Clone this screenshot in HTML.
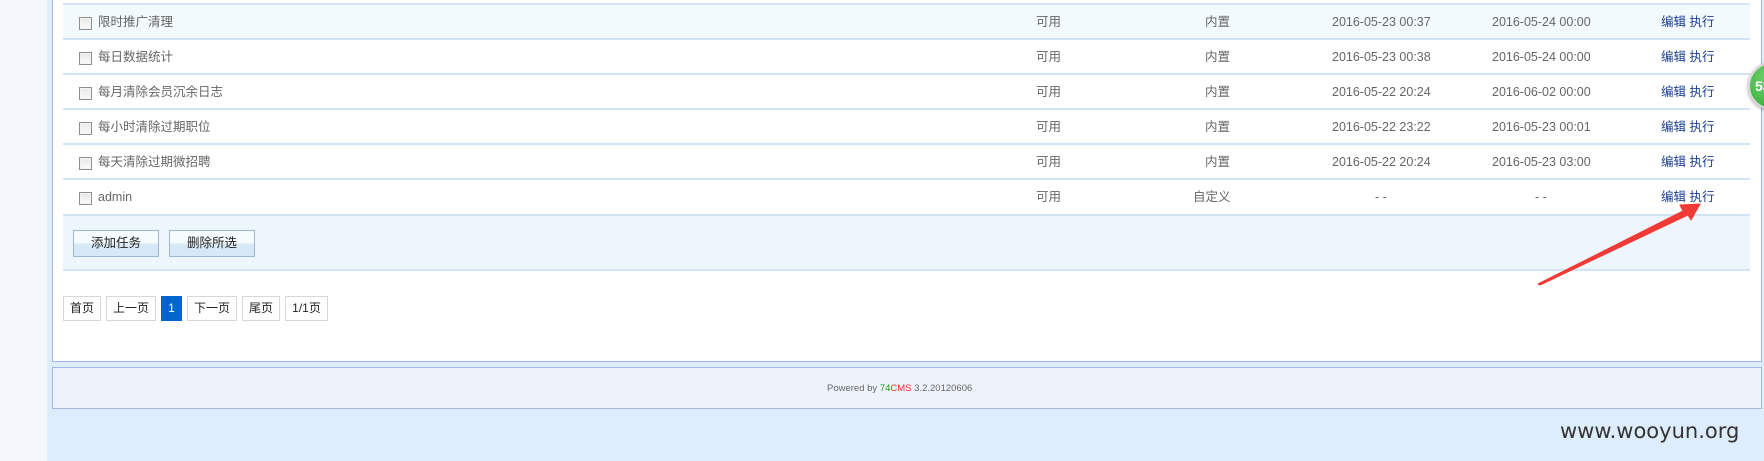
<!DOCTYPE html>
<html><head><meta charset="utf-8"><style>
*{margin:0;padding:0;box-sizing:border-box}
body{width:1764px;height:461px;overflow:hidden;background:#deedfc;position:relative;font-family:"Liberation Sans","Noto Sans CJK SC",sans-serif;font-size:12px;color:#666}
.side{position:absolute;left:0;top:0;width:47px;height:461px;background:#f4f8fd}
.panel{position:absolute;left:52px;top:-2px;width:1710px;height:364px;background:#fff;border:1px solid #a3b7df;border-top:none}
.row{position:absolute;left:63px;width:1687px;height:35px;border-top:2px solid #d3e4f6}
.row span{position:absolute;top:10px;height:15px;line-height:15px;font-size:12.5px;white-space:nowrap}
.cb{position:absolute;left:16px;top:12px;width:13px;height:13px;border:1px solid #8f8f8f;background:linear-gradient(#e8e8e8,#fafafa);box-shadow:inset 0 0 0 1px #f4f4f4}
.a{color:#1a3d8f}
.btnarea{position:absolute;left:63px;top:214px;width:1687px;height:57px;background:#eef6fd;border-top:2px solid #d3e4f6;border-bottom:2px solid #d3e4f6}
.btn{position:absolute;top:14px;width:86px;height:27px;border:1px solid #9fb6d6;background:linear-gradient(#f6fbfe 0%,#f6fbfe 45%,#d7e9f6 55%,#d7e9f6 100%);color:#222;font-size:12.5px;text-align:center;line-height:25px}
.pg{position:absolute;top:296px;height:25px;border:1px solid #d8d8d8;background:#fff;color:#222;font-size:12px;text-align:center;line-height:23px}
.foot{position:absolute;left:52px;top:367px;width:1710px;height:42px;background:#eef3fb;border:1px solid #a3b7df;font-size:9.5px;color:#666}
</style></head><body>
<div class="side"></div>
<div class="panel"></div>

<div class="row" style="top:3px;background:#f3fafe"><div class="cb"></div><span style="left:35px">限时推广清理</span><span style="left:973px">可用</span><span style="left:1142px">内置</span><span style="left:1269px">2016-05-23 00:37</span><span style="left:1429px">2016-05-24 00:00</span><span class="a" style="left:1598px">编辑 执行</span></div>
<div class="row" style="top:38px"><div class="cb"></div><span style="left:35px">每日数据统计</span><span style="left:973px">可用</span><span style="left:1142px">内置</span><span style="left:1269px">2016-05-23 00:38</span><span style="left:1429px">2016-05-24 00:00</span><span class="a" style="left:1598px">编辑 执行</span></div>
<div class="row" style="top:73px"><div class="cb"></div><span style="left:35px">每月清除会员沉余日志</span><span style="left:973px">可用</span><span style="left:1142px">内置</span><span style="left:1269px">2016-05-22 20:24</span><span style="left:1429px">2016-06-02 00:00</span><span class="a" style="left:1598px">编辑 执行</span></div>
<div class="row" style="top:108px"><div class="cb"></div><span style="left:35px">每小时清除过期职位</span><span style="left:973px">可用</span><span style="left:1142px">内置</span><span style="left:1269px">2016-05-22 23:22</span><span style="left:1429px">2016-05-23 00:01</span><span class="a" style="left:1598px">编辑 执行</span></div>
<div class="row" style="top:143px"><div class="cb"></div><span style="left:35px">每天清除过期微招聘</span><span style="left:973px">可用</span><span style="left:1142px">内置</span><span style="left:1269px">2016-05-22 20:24</span><span style="left:1429px">2016-05-23 03:00</span><span class="a" style="left:1598px">编辑 执行</span></div>
<div class="row" style="top:178px"><div class="cb"></div><span style="left:35px">admin</span><span style="left:973px">可用</span><span style="left:1130px">自定义</span><span style="left:1312px">- -</span><span style="left:1472px">- -</span><span class="a" style="left:1598px">编辑 执行</span></div>

<div class="btnarea"><div class="btn" style="left:10px">添加任务</div><div class="btn" style="left:106px">删除所选</div></div>

<div class="pg" style="left:63px;width:38px">首页</div>
<div class="pg" style="left:106px;width:50px">上一页</div>
<div class="pg" style="left:161px;width:21px;background:#0066cc;border-color:#0066cc;color:#fff">1</div>
<div class="pg" style="left:187px;width:50px">下一页</div>
<div class="pg" style="left:242px;width:38px">尾页</div>
<div class="pg" style="left:285px;width:43px">1/1页</div>

<div class="foot"><div style="position:absolute;left:774px;top:15px">Powered by <span style="color:#1a9a1a">74</span><span style="color:#e8321e">CMS</span> 3.2.20120606</div></div>

<div style="position:absolute;left:1560px;top:419px;font-family:'DejaVu Sans',sans-serif;font-size:21px;color:#333">www.wooyun.org</div>

<div style="position:absolute;left:1748px;top:62px;width:48px;height:48px;border-radius:50%;background:radial-gradient(circle at 40% 35%,#6fd36f,#2ea52e);border:2px solid #d8d8d8;box-shadow:0 1px 3px rgba(0,0,0,.4);color:#fff;font-weight:bold;font-size:14px;line-height:44px;padding-left:5px">53</div>

<svg style="position:absolute;left:0;top:0" width="1764" height="461">
<path d="M1538 284 L1683 211 L1680 205 L1700 204 L1691 220 L1688 215 L1540 285 Z" fill="#f03a35" stroke="#f03a35" stroke-width="1" stroke-linejoin="round"/>
</svg>
</body></html>
